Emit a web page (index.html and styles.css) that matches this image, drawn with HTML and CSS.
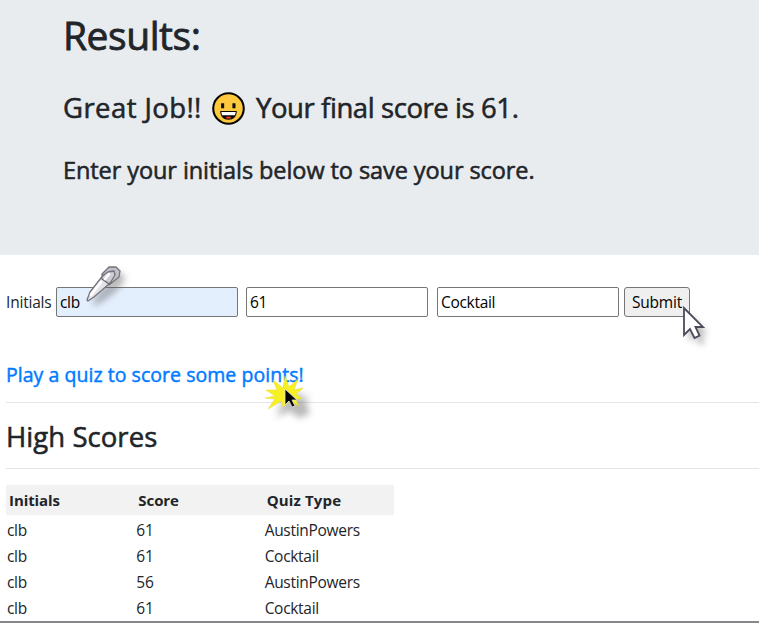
FILE: index.html
```html
<!DOCTYPE html>
<html lang="en">
<head>
<meta charset="utf-8">
<title>Quiz Results</title>
<link rel="stylesheet" href="styles.css">
</head>
<body>
<header class="results">
  <h1>Results:</h1>
  <h2><span class="praise">Great Job!!</span><svg class="smile" viewBox="0 0 32 32"><circle cx="16" cy="16" r="14.8" fill="#ffc83d" stroke="#050505" stroke-width="2"/><path d="M10.3 10.800v5M21.3 10.800v5" stroke="#111" stroke-width="3"/><path d="M8 18.500h16c0 5.500-3.200 8.500-8 8.500s-8-3-8-8.500z" fill="#080808"/><path d="M9 19.500h14l-.7 3H9.700z" fill="#fff"/><path d="M13 25q3-2.500 6 0-3 1.800-6 0z" fill="#f03a17"/></svg><span class="final">Your final score is 61.</span></h2>
  <h3>Enter your initials below to save your score.</h3>
</header>
<main>
  <form class="save">
    <label for="initials">Initials</label>
    <div class="field"><input class="filled" id="initials" value="clb">
      <svg class="pen" viewBox="0 0 50 50"><path class="shadow" d="M6 37 10 27 22 13 28 4 36 4 39 9 36 16 26 26 13 35z"/><g stroke="#74727b" stroke-width="1.300" stroke-linejoin="round"><path d="M6 36 9 28 20 14 28 20 13 33 7 37z" fill="#e5e3e8"/><path d="M20 14 26 7 34 6 35 13 28 20z" fill="#cfcdd4"/><path d="M21 10 28 3h7l4 4-1 6-10 8 6-10-1-4-6 1-6 4z" fill="#c1bfc8"/></g><path d="M10 31 20 18M24 15l4-5" fill="none" stroke="#fff" stroke-width="2.800" stroke-linecap="round"/></svg>
    </div>
    <input class="score" value="61" aria-label="Score">
    <input class="quiz" value="Cocktail" aria-label="Quiz type">
    <div class="action"><button type="button">Submit</button>
      <svg class="pointer" viewBox="0 0 34 46"><path class="shadow" d="M2 2v28l6-6 5 9 5-2-4-9h7z"/><path d="M2 1v27l6-6 4.500 9 5-2.500-4-8.500H21z" fill="#fff" stroke="#4b4b5c" stroke-width="1.800"/></svg>
    </div>
  </form>
  <div class="play"><a href="#">Play a quiz to score some points!</a>
    <svg class="burst" viewBox="0 0 52 44"><path class="shadow" d="M3 21 15 18 6 8 18 13 19 2 25 12 31 2 32 13 40 7 36 15 40 27 28 31 20 24 5 31 12 22z"/><path d="M0 16 10 14 1 8 12 8 8-2 18 6 20-6 24 5 33-3 29 8 38 6 31 12 37 17 30 17 34 24 25 19 18 25 16 19 3 27 10 17z" fill="#f7f023" stroke="#dedb28" stroke-width=".5"/><path d="M20 7v16l4-4 3 6 3-1-3-6h5z" fill="#050505" stroke="#e8e8df" stroke-width=".8"/></svg>
  </div>
  <section class="scores">
    <h2>High Scores</h2>
    <table>
      <thead><tr><th>Initials</th><th>Score</th><th>Quiz Type</th></tr></thead>
      <tbody>
        <tr><td>clb</td><td>61</td><td>AustinPowers</td></tr>
        <tr><td>clb</td><td>61</td><td>Cocktail</td></tr>
        <tr><td>clb</td><td>56</td><td>AustinPowers</td></tr>
        <tr><td>clb</td><td>61</td><td>Cocktail</td></tr>
      </tbody>
    </table>
  </section>
</main>
</body>
</html>
```
FILE: styles.css
```css
* { box-sizing: border-box; }
html, body { margin: 0; height: 623px; overflow: hidden; }
body { background: #fff; color: #212529; font: 15.5px/24px "Open Sans", "Noto Sans", sans-serif; letter-spacing: -.3px; border-bottom: 2px solid #85878a; }
h1, h2, h3 { margin: 0; font-weight: 400; -webkit-text-stroke: .55px currentColor; }
.results { height: 255px; padding: 11px 63px 0; background: #e9ecef; }
h1 { height: 48px; font-size: 39px; line-height: 48px; letter-spacing: -.45px; -webkit-text-stroke-width: .8px; }
.results h2 { display: flex; align-items: center; height: 34px; margin-top: 32px; font-size: 27.5px; line-height: 34px; white-space: nowrap; }
.smile { width: 33px; height: 33px; margin: 0 11px 0 11px; flex: none; }
.praise { width: 138px; letter-spacing: .42px; }
.final { letter-spacing: -.42px; }
h3 { height: 30px; margin-top: 30px; font-size: 23.5px; line-height: 30px; white-space: nowrap; letter-spacing: -.08px; }
main { padding: 32px 0 0; }
.save { display: flex; height: 30px; padding-left: 6px; align-items: center; }
label { width: 50px; letter-spacing: -.2px; }
.field, .action { position: relative; height: 30px; }
input { display: block; width: 182px; height: 30px; padding: 1px 3px; border: 1px solid #767676; border-radius: 2px; background: #fff; color: #000; font: inherit; letter-spacing: inherit; outline: 0; }
.filled { background: #e4effe; }
.score { margin-left: 8px; }
.quiz { margin-left: 9px; }
.action { margin-left: 5px; }
button { display: block; width: 66px; height: 30px; padding: 0; border: 1px solid #767676; border-radius: 3px; background: #efefef; color: #000; font: inherit; letter-spacing: -.2px; }
.pen, .pointer, .burst { position: absolute; overflow: visible; pointer-events: none; }
.pen { width: 50px; height: 50px; left: 25px; top: -23px; }
.pointer { width: 34px; height: 46px; left: 58px; top: 20px; }
.shadow { opacity: .4; fill: #555; transform: translate(5px, 5px); filter: blur(3px); }
.play { position: relative; height: 86px; margin-left: 6px; padding-top: 46px; border-bottom: 1px solid #e4e5e6; }
a { display: block; color: #007bff; font-size: 19.5px; line-height: 24px; text-decoration: none; letter-spacing: .04px; -webkit-text-stroke: .45px currentColor; }
.burst { width: 52px; height: 44px; left: 259px; top: 65px; }
.scores { margin-left: 6px; }
.scores h2 { height: 66px; padding-top: 17px; font-size: 27.5px; line-height: 34px; letter-spacing: .05px; border-bottom: 1px solid #e4e5e6; }
table { width: 388px; margin: 16px 0 0; border-collapse: collapse; table-layout: fixed; }
th { height: 30px; padding: 0 2px 0 3px; background: #f2f2f2; text-align: left; font-size: 15px; font-weight: 700; letter-spacing: -.08px; }
td { height: 26px; padding: 0 1px; line-height: 24px; }
tbody tr:first-child td { height: 28px; padding-top: 2px; }
th:last-child { padding-left: 2px; letter-spacing: .15px; }
td:last-child { padding-left: 0; }
```
